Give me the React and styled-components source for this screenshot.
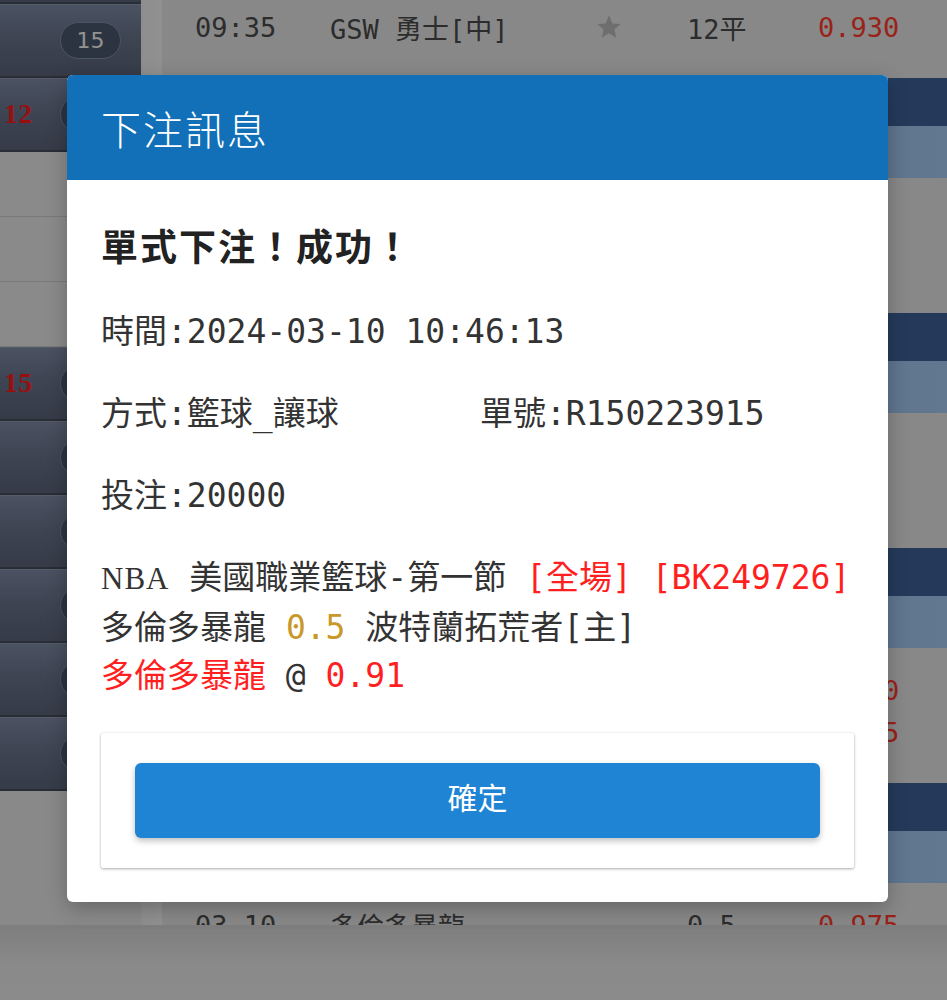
import React from 'react';
import styled, { createGlobalStyle } from 'styled-components';

const GlobalStyle = createGlobalStyle`
  html, body { margin: 0; padding: 0; }
  body {
    width: 947px;
    height: 1000px;
    overflow: hidden;
    font-family: "Noto Sans CJK TC", sans-serif;
    background: #e4e4e4;
  }
`;

const MONO = `"DejaVu Sans Mono", "Noto Sans CJK TC", monospace`;

/* ---------- background page ---------- */
const Screen = styled.div`
  position: relative;
  width: 947px;
  height: 1000px;
  overflow: hidden;
  display: flex;
  flex-direction: column;
  background: #e4e4e4;
`;

const Workspace = styled.div`
  flex: none;
  height: 925px;
  display: grid;
  grid-template-columns: 141px 21px 1fr;
  overflow: hidden;
`;

const Footer = styled.div`
  flex: 1;
  background: linear-gradient(180deg, #d2d2d2 0px, #e6e6e6 40px, #e8e8e8 100%);
`;

const Sidebar = styled.div`
  display: flex;
  flex-direction: column;
  margin-top: -70px;
  background: #e4e4e4;
`;

const SideRow = styled.div`
  flex: none;
  height: 71px;
  display: flex;
  align-items: center;
  justify-content: space-between;
  padding: 0 20px 0 4px;
  background: linear-gradient(180deg, #7d88a2 0%, #68738a 45%, #596378 100%);
  border-top: 1px solid #8e99b0;
  border-bottom: 2px solid #434c5b;
`;

const SideSubRow = styled.div`
  flex: none;
  height: 64px;
  background: #e6e6e6;
  border-bottom: 1px solid #cacaca;
`;

const SideCount = styled.span`
  font-family: "Liberation Serif", "DejaVu Serif", serif;
  font-weight: 700;
  font-size: 27px;
  color: #ff1a1a;
  letter-spacing: 1px;
`;

const Badge = styled.span`
  width: 61px;
  height: 37px;
  box-sizing: border-box;
  border-radius: 19px;
  background: #4c586d;
  border: 1px solid #7f8ea6;
  display: flex;
  align-items: center;
  justify-content: center;
  font-family: "DejaVu Sans", sans-serif;
  font-size: 22px;
  color: #f4f4f4;
`;

const Gutter = styled.div`
  background: linear-gradient(90deg, #ececec, #f2f2f2);
`;

const MainList = styled.div`
  display: flex;
  flex-direction: column;
  margin-top: -57px;
`;

const MatchRow = styled.div`
  flex: none;
  height: 135px;
  box-sizing: border-box;
  padding-top: 21px;
  background: #e3e3e3;
`;

const MatchLine = styled.div`
  display: grid;
  grid-template-columns: 135px 265px 92px 131px 1fr;
  align-items: center;
  height: 42px;
  padding-left: 33px;
  font-family: ${MONO};
  font-size: 27px;
  color: #4a4a4a;
  white-space: nowrap;
`;

const Odds = styled.span`
  color: #ff3a2a;
`;

const StarIcon = styled.svg`
  width: 28px;
  height: 28px;
  fill: #b8b8b8;
  margin-top: 6px;
`;

const LeagueBar = styled.div`
  flex: none;
  height: 48px;
  display: flex;
  align-items: center;
  padding-left: 30px;
  background: #3e6198;
  color: #ffffff;
  font-size: 24px;
`;

const LeagueSub = styled.div`
  flex: none;
  height: 52px;
  background: linear-gradient(90deg, #86aedc 0%, #94bbe6 70%, #a2c8f0 100%);
`;

/* ---------- dialog ---------- */
const Backdrop = styled.div`
  position: absolute;
  inset: 0;
  background: rgba(0, 0, 0, 0.4);
  display: flex;
  align-items: flex-start;
  padding: 75px 0 0 67px;
`;

const Dialog = styled.div`
  width: 821px;
  background: #ffffff;
  border-radius: 6px;
  overflow: hidden;
  box-shadow: 0 6px 20px rgba(0, 0, 0, 0.25);
`;

const DialogHeader = styled.div`
  height: 105px;
  display: flex;
  align-items: center;
  padding-left: 34px;
  background: #1170b8;
  color: #ffffff;
  font-family: "Noto Sans CJK TC", sans-serif;
  font-weight: 300;
  font-size: 40px;
  letter-spacing: 2px;
`;

const DialogBody = styled.div`
  padding: 40px 34px 34px 34px;
  color: #333333;
`;

const Headline = styled.div`
  font-family: "Noto Sans CJK TC", sans-serif;
  font-weight: 700;
  font-size: 37px;
  line-height: 50px;
  letter-spacing: 2px;
  color: #222222;
  margin-bottom: 38px;
`;

const InfoLine = styled.div`
  display: grid;
  grid-template-columns: ${(p) => (p.$split ? '379px auto' : 'auto')};
  font-family: ${MONO};
  font-size: 33px;
  line-height: 48px;
  margin-bottom: 34px;
  white-space: nowrap;
`;

const Detail = styled.div`
  font-family: ${MONO};
  font-size: 33px;
  line-height: 48.5px;
  white-space: nowrap;
  margin-bottom: 32px;
`;

const Tone = styled.span`
  color: ${(p) => (p.$tone === 'red' ? '#ff1f1f' : p.$tone === 'gold' ? '#c9982a' : '#333333')};
`;

const Serif = styled.span`
  font-family: "Liberation Serif", "DejaVu Serif", serif;
  font-size: 31px;
  letter-spacing: 1px;
`;

const ActionCard = styled.div`
  padding: 30px 34px;
  background: #ffffff;
  border-radius: 2px;
  box-shadow: 0 1px 3px rgba(0, 0, 0, 0.32), 0 0 2px rgba(0, 0, 0, 0.06);
`;

const ConfirmButton = styled.button`
  display: flex;
  align-items: center;
  justify-content: center;
  width: 100%;
  height: 75px;
  padding: 0 0 8px;
  border: none;
  border-radius: 6px;
  background: #1f84d4;
  color: #ffffff;
  font-family: "Noto Sans CJK TC", sans-serif;
  font-size: 30px;
  line-height: 1;
  box-shadow: 0 3px 6px rgba(0, 0, 0, 0.25);
  cursor: pointer;
`;

const Star = () => (
  <StarIcon viewBox="0 0 24 24">
    <path d="M12 2l2.9 6.9 7.1.6-5.4 4.7 1.6 7-6.2-3.8-6.2 3.8 1.6-7L2 9.5l7.1-.6z" />
  </StarIcon>
);

const Match = ({ a, b }) => (
  <MatchRow>
    <MatchLine>
      <span>{a.time}</span>
      <span>{a.team}</span>
      <span>{a.star ? <Star /> : null}</span>
      <span>{a.line}</span>
      <Odds>{a.odds}</Odds>
    </MatchLine>
    <MatchLine>
      <span>{b.time}</span>
      <span>{b.team}</span>
      <span>{b.star ? <Star /> : null}</span>
      <span>{b.line}</span>
      <Odds>{b.odds}</Odds>
    </MatchLine>
  </MatchRow>
);

const League = ({ name }) => (
  <>
    <LeagueBar>{name}</LeagueBar>
    <LeagueSub />
  </>
);

export default function App() {
  return (
    <>
      <GlobalStyle />
      <Screen>
        <Workspace>
          <Sidebar>
            <SideRow>
              <span />
              <Badge>8</Badge>
            </SideRow>
            <SideRow>
              <span />
              <Badge>15</Badge>
            </SideRow>
            <SideRow>
              <SideCount>12</SideCount>
              <Badge>12</Badge>
            </SideRow>
            <SideSubRow />
            <SideSubRow />
            <SideSubRow />
            <SideRow>
              <SideCount>15</SideCount>
              <Badge>15</Badge>
            </SideRow>
            <SideRow>
              <span />
              <Badge>6</Badge>
            </SideRow>
            <SideRow>
              <span />
              <Badge>4</Badge>
            </SideRow>
            <SideRow>
              <span />
              <Badge>9</Badge>
            </SideRow>
            <SideRow>
              <span />
              <Badge>3</Badge>
            </SideRow>
            <SideRow>
              <span />
              <Badge>7</Badge>
            </SideRow>
          </Sidebar>
          <Gutter />
          <MainList>
            <Match
              a={{ time: '03-10', team: 'LAL 湖人', line: '', odds: '0.970' }}
              b={{ time: '09:35', team: 'GSW 勇士[中]', star: true, line: '12平', odds: '0.930' }}
            />
            <League name="NBA 美國職業籃球" />
            <Match
              a={{ time: '03-10', team: '金塊', line: '', odds: '' }}
              b={{ time: '10:05', team: '灰熊[主]', line: '', odds: '' }}
            />
            <League name="NBA 美國職業籃球-上半場" />
            <Match
              a={{ time: '03-10', team: '公鹿', line: '', odds: '' }}
              b={{ time: '11:05', team: '快艇[主]', line: '', odds: '' }}
            />
            <League name="NBA 美國職業籃球-第一節" />
            <Match
              a={{ time: '03-10', team: '塞爾提克', line: '3.5', odds: '0.910' }}
              b={{ time: '10:35', team: '太陽[主]', line: '', odds: '0.975' }}
            />
            <League name="NBA 美國職業籃球-第一節" />
            <Match
              a={{ time: '03-10', team: '多倫多暴龍', line: '0.5', odds: '0.975' }}
              b={{ time: '11:05', team: '波特蘭拓荒者[主]', line: '', odds: '0.885' }}
            />
          </MainList>
        </Workspace>
        <Footer />

        <Backdrop>
          <Dialog role="dialog" aria-label="下注訊息">
            <DialogHeader>下注訊息</DialogHeader>
            <DialogBody>
              <Headline>單式下注！成功！</Headline>
              <InfoLine>時間:2024-03-10 10:46:13</InfoLine>
              <InfoLine $split>
                <span>方式:籃球_讓球</span>
                <span>單號:R150223915</span>
              </InfoLine>
              <InfoLine>投注:20000</InfoLine>
              <Detail>
                <div>
                  <Serif>NBA</Serif> 美國職業籃球-第一節 <Tone $tone="red">[全場] [BK249726]</Tone>
                </div>
                <div>
                  多倫多暴龍 <Tone $tone="gold">0.5</Tone> 波特蘭拓荒者[主]
                </div>
                <div>
                  <Tone $tone="red">多倫多暴龍</Tone> @ <Tone $tone="red">0.91</Tone>
                </div>
              </Detail>
              <ActionCard>
                <ConfirmButton type="button">確定</ConfirmButton>
              </ActionCard>
            </DialogBody>
          </Dialog>
        </Backdrop>
      </Screen>
    </>
  );
}
